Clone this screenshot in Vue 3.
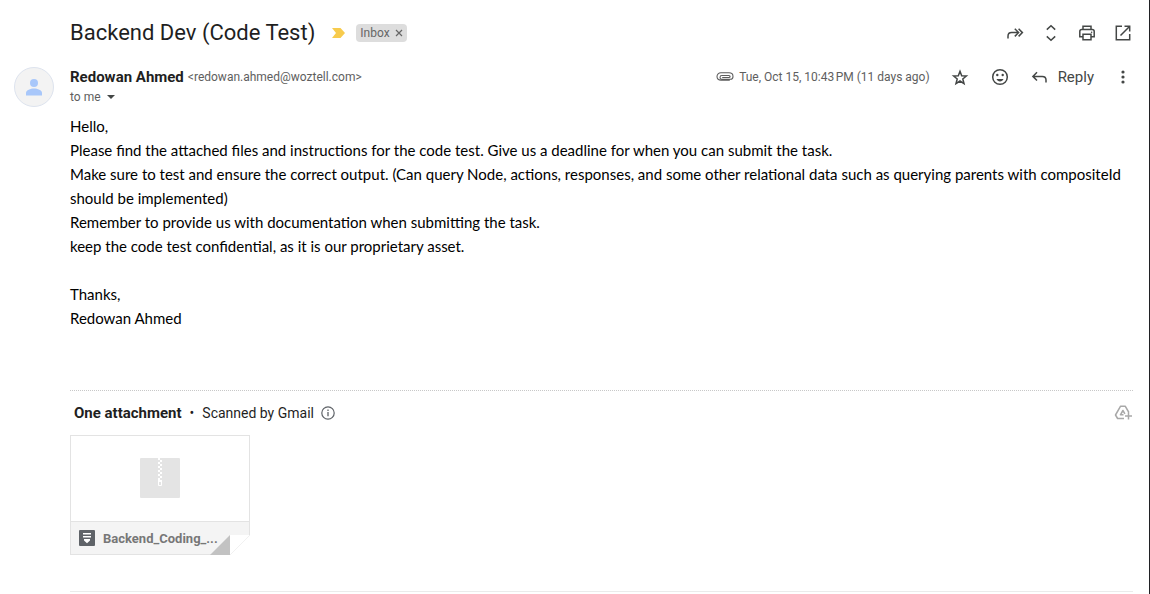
<script setup>
const paragraphs = [
  'Hello,',
  'Please find the attached files and instructions for the code test. Give us a deadline for when you can submit the task.',
  'Make sure to test and ensure the correct output. (Can query Node, actions, responses, and some other relational data such as querying parents with compositeId should be implemented)',
  'Remember to provide us with documentation when submitting the task.',
  'keep the code test confidential, as it is our proprietary asset.',
  '',
  'Thanks,',
  'Redowan Ahmed',
]
const zipTeeth = Array.from({ length: 11 }, (_, i) => ({ x: i % 2 ? 20 : 18, y: i * 2 }))
</script>

<template>
  <main class="page">
    <header class="subject">
      <h1>Backend Dev (Code Test)</h1>
      <button class="marker" aria-label="Important">
        <svg width="14" height="12" viewBox="0 0 14 12"><path d="M0 1h8.500L13 6l-4.500 5H0l4-5z" fill="#f7cb4d" /></svg>
      </button>
      <span class="chip">Inbox
        <button aria-label="Remove label Inbox">
          <svg width="8" height="8" viewBox="0 0 8 8"><path d="M1 1l6 6M7 1L1 7" stroke="#666" stroke-width="1.200" /></svg>
        </button>
      </span>
      <nav class="tools">
        <button aria-label="Forward all">
          <svg viewBox="0 0 20 20" class="line"><path d="M3 15.500v-2.300c0-2.200 1.400-3.600 3.600-3.600h6.100M9.800 5.800l3.800 3.800-3.800 3.800M13.600 5.800l3.800 3.800-3.800 3.800" /></svg>
        </button>
        <button aria-label="Expand all">
          <svg viewBox="0 0 20 20" class="line"><path d="M5.800 6.600L10 2.700l4.200 3.900M5.800 13.400l4.200 3.900 4.200-3.900" /></svg>
        </button>
        <button aria-label="Print all">
          <svg viewBox="0 0 20 20" class="line"><path d="M6 6.500V3.300h8v3.200M5.500 13.700H2.800V8.600c0-1.200.8-2 2-2h10.400c1.200 0 2 .8 2 2v5.100h-2.700M6 11.200h8v5.500H6z" /><circle cx="14.600" cy="9.200" r=".8" fill="#444746" stroke="none" /></svg>
        </button>
        <button aria-label="In new window">
          <svg viewBox="0 0 20 20" class="line"><path d="M9 3.300H3.300v13.400h13.400V11M11.500 3.300h5.200v5.200M16.500 3.500L7.500 12.500" /></svg>
        </button>
      </nav>
    </header>

    <section class="message">
      <div class="avatar">
        <svg width="40" height="40" viewBox="0 0 40 40"><circle cx="20" cy="16" r="4" fill="#a8c7fa" /><path d="M12 28.500V26c0-2.800 4.500-4.500 8-4.500s8 1.700 8 4.500v2.500z" fill="#a8c7fa" /></svg>
      </div>
      <div class="content">
        <div class="sender">
          <div class="from">
            <strong>Redowan Ahmed</strong>
            <span class="email">&lt;redowan.ahmed@woztell.com&gt;</span>
          </div>
          <div class="actions">
            <svg class="clip" width="18" height="12" viewBox="0 0 18 12"><path d="M14.500 8.300H5.800C4.700 8.300 4 7.500 4 6.400s.8-1.900 1.900-1.900h7c.7 0 1.200.4 1.200 1s-.5 1-1.200 1H6.200M14.500 8.300M13.800 9.200H5C2.600 9.200 1 7.800 1 5.600S2.600 1.800 5 1.800h8c2.400 0 4 1.500 4 3.600 0 1.700-1 2.900-2.600 2.900" fill="none" stroke="#5e5e5e" stroke-width="1.100" /></svg>
            <time>Tue, Oct 15, 10:43&#8239;PM (11 days ago)</time>
            <button class="star" aria-label="Star">
              <svg viewBox="0 0 20 20" class="line"><path d="M10 4.300l1.700 4.400 4.700.3-3.600 3 1.200 4.600-4-2.600-4 2.600 1.200-4.600-3.600-3 4.700-.3z" /></svg>
            </button>
            <button class="react" aria-label="Add reaction">
              <svg viewBox="0 0 20 20" class="line"><circle cx="10" cy="10" r="7.300" /><path d="M6.500 12h7c-.6 1.500-1.900 2.400-3.500 2.400S7.100 13.500 6.500 12z" fill="#444746" stroke="none" /><circle cx="7.300" cy="8" r="1.200" fill="#444746" stroke="none" /><circle cx="12.700" cy="8" r="1.200" fill="#444746" stroke="none" /></svg>
            </button>
            <button class="reply">
              <svg viewBox="0 0 20 20" class="line"><path d="M7 5.300L2.900 9.400 7 13.500M3.100 9.400h9.200c2.200 0 3.700 1.400 3.700 3.600v2.500" /></svg>
              Reply
            </button>
            <button class="more" aria-label="More">
              <svg viewBox="0 0 20 20" fill="#444746"><circle cx="10" cy="5" r="1.600" /><circle cx="10" cy="10" r="1.600" /><circle cx="10" cy="15" r="1.600" /></svg>
            </button>
          </div>
        </div>
        <button class="recipient">to me
          <svg width="8" height="4" viewBox="0 0 8 4"><path d="M0 0h8L4 4z" fill="#444746" /></svg>
        </button>

        <div class="body">
          <p v-for="(text, i) in paragraphs" :key="i">{{ text }}</p>
        </div>

        <section class="attachments">
          <div class="summary">
            <strong>One attachment</strong>
            <span class="dot">•</span>
            <span>Scanned by Gmail</span>
            <button class="info" aria-label="About scanning">
              <svg width="14" height="14" viewBox="0 0 14 14"><circle cx="7" cy="7" r="6.200" fill="none" stroke="#5f6368" stroke-width="1.200" /><path d="M7 6v4.300M7 3.500v1.400" stroke="#5f6368" stroke-width="1.300" /></svg>
            </button>
            <button class="drive" aria-label="Add to Drive">
              <svg viewBox="0 0 20 20" fill="none" stroke="#a8a8a8" stroke-width="1.500" stroke-linejoin="round"><path d="M11 15.500H4.600L2.500 12 7.600 3.200h4.600l3.700 6.300M10.500 11.800H7.400L9.900 7.500l2 3.400M15.500 9.500v7M12 13h7" /></svg>
            </button>
          </div>
          <a class="card" href="#">
            <span class="preview">
              <svg width="40" height="40" viewBox="0 0 40 40">
                <rect width="40" height="40" rx="1" fill="#e4e4e4" />
                <g fill="#fff">
                  <rect v-for="t in zipTeeth" :key="t.y" :x="t.x" :y="t.y" width="2" height="2" />
                  <path fill-rule="evenodd" d="M18 22h4v5q0 1-1 1h-2q-1 0-1-1zm1 2v3h2v-3z" />
                </g>
              </svg>
            </span>
            <span class="filename">
              <svg width="16" height="16" viewBox="0 0 16 16"><rect width="16" height="16" rx="1" fill="#5f6368" /><path d="M4 3h8v1.500H4zM4 6h8v1.500H4zM5 9h6v1.500l-3 2.700-3-2.700z" fill="#fff" /></svg>
              <span>Backend_Coding_...</span>
            </span>
            <svg class="fold" width="40" height="20" viewBox="0 0 40 20"><path d="M20 0h20v20H20z" fill="#fff" /><path d="M20 0v20H0z" fill="#c2c2c2" /><path d="M40 0L20 20" stroke="#f1f1f1" /></svg>
          </a>
        </section>
      </div>
    </section>
  </main>
</template>

<style>
body {
  background: #fff;
}
</style>

<style scoped>
.page {
  box-sizing: border-box;
  min-height: 100vh;
  padding: 13px 16px 0 14px;
  border-right: 1px solid #202124;
  font-family: Roboto, "Liberation Sans", sans-serif;
  font-size: 14px;
  color: #1f1f1f;
}
button {
  display: inline-flex;
  align-items: center;
  padding: 0;
  border: 0;
  background: none;
  font: inherit;
  color: inherit;
  cursor: pointer;
}
svg {
  display: block;
  flex: none;
}
button svg:not([width]) {
  width: 20px;
  height: 20px;
}
.line {
  fill: none;
  stroke: #444746;
  stroke-width: 1.500;
}
.subject {
  display: flex;
  align-items: center;
  height: 40px;
  padding-left: 56px;
}
h1 {
  margin: 0;
  font-size: 22px;
  font-weight: 400;
  line-height: 28px;
}
.marker {
  margin: 0 10px 0 17px;
}
.chip {
  display: flex;
  align-items: center;
  gap: 5px;
  height: 18px;
  padding: 0 4px;
  border-radius: 4px;
  background: #ddd;
  color: #666;
  font-size: 12px;
}
.tools {
  display: flex;
  gap: 16px;
  margin-left: auto;
}
.message {
  display: flex;
  gap: 16px;
  padding-top: 14px;
}
.avatar {
  box-sizing: border-box;
  flex: none;
  width: 40px;
  height: 40px;
  overflow: hidden;
  border: 1px solid #dde3ee;
  border-radius: 50%;
  background: #f3f3f3;
}
.avatar svg {
  margin: -1px;
}
.content {
  flex: 1;
  min-width: 0;
  padding-bottom: 36px;
  border-bottom: 1px solid #ebebeb;
}
.sender {
  display: flex;
  justify-content: space-between;
  height: 20px;
  line-height: 20px;
}
.from {
  display: flex;
  gap: 4px;
}
.from strong,
.summary strong {
  font-size: 15px;
  font-weight: 700;
}
.email,
time,
.recipient {
  color: #5e5e5e;
  font-size: 12px;
}
.actions {
  display: flex;
  align-items: center;
}
.clip {
  margin-right: 5px;
}
.star {
  margin-left: 20px;
}
.react {
  margin: 0 20px;
}
.reply {
  gap: 8px;
  color: #444746;
  font-size: 15px;
}
.more {
  margin-left: 19px;
}
.recipient {
  gap: 6px;
  height: 20px;
}
.body {
  padding: 7px 0 60px;
  color: #000;
  font-family: Lato, sans-serif;
  font-size: 15px;
  line-height: 24px;
}
.body p {
  min-height: 24px;
  margin: 0;
}
.attachments {
  border-top: 1px dotted #c8c8c8;
}
.summary {
  display: flex;
  align-items: center;
  height: 44px;
  padding-left: 4px;
}
.dot {
  margin: 0 8px;
}
.info {
  margin-left: 7px;
}
.drive {
  margin-left: auto;
}
.card {
  position: relative;
  display: block;
  box-sizing: border-box;
  width: 180px;
  border: 1px solid #e3e3e3;
  color: #777;
  text-decoration: none;
}
.preview {
  display: flex;
  align-items: center;
  justify-content: center;
  height: 85px;
}
.preview svg {
  margin-bottom: 2px;
}
.filename {
  display: flex;
  align-items: center;
  gap: 8px;
  height: 32px;
  padding-left: 8px;
  border-top: 1px solid #e3e3e3;
  background: #f4f4f4;
  font-size: 13px;
  font-weight: 700;
}
.fold {
  position: absolute;
  right: -1px;
  bottom: -1px;
}
</style>
